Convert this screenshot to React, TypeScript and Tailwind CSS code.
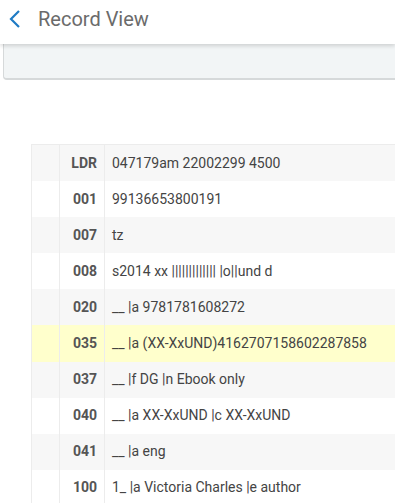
import React from "react";

const rows = [
  { tag: "LDR", value: "047179am 22002299 4500" },
  { tag: "001", value: "99136653800191" },
  { tag: "007", value: "tz" },
  { tag: "008", value: "s2014 xx ||||||||||||| |o||und d" },
  { tag: "020", value: "__ |a 9781781608272" },
  { tag: "035", value: "__ |a (XX-XxUND)4162707158602287858", highlight: true },
  { tag: "037", value: "__ |f DG |n Ebook only" },
  { tag: "040", value: "__ |a XX-XxUND |c XX-XxUND" },
  { tag: "041", value: "__ |a eng" },
  { tag: "100", value: "1_ |a Victoria Charles |e author" },
];

export default function App() {
  return (
    <div
      className="relative h-[503px] w-[395px] overflow-hidden bg-white"
      style={{ fontFamily: "Roboto, 'Liberation Sans', sans-serif" }}
    >
      <header className="relative z-10 flex h-[44px] items-center bg-white pb-[6px] shadow-[0_2px_4px_rgba(0,0,0,0.15)]">
        <button className="ml-[7px] flex h-[30px] w-[16px] items-center justify-center text-[#1f7bc4]">
          <svg width="14" height="20" viewBox="0 0 14 20" fill="none">
            <path d="M11 2 L3 10 L11 18" stroke="currentColor" strokeWidth="2.2" />
          </svg>
        </button>
        <h1 className="ml-[15px] text-[20px] text-[#6b6b6b]">Record View</h1>
      </header>

      <div className="ml-[3px] h-[36px] w-[420px] rounded-bl-[4px] border-b-2 border-l border-[#d6d9da] bg-[#f2f5f6]" />

      <div className="ml-[31px] mt-[64px] w-[400px] border-l border-t border-[#ececec] text-[14px] text-[#444]">
        {rows.map((r) => (
          <div
            key={r.tag}
            className={
              "flex h-[36.1px] items-center " +
              (r.highlight ? "bg-[#ffffcc]" : ["LDR", "007", "020", "037", "041"].includes(r.tag) ? "bg-[#f7f7f7]" : "bg-white")
            }
          >
            <div className="h-full w-[28px] border-r border-[#ececec]" />
            <div className="flex h-full w-[45px] items-center justify-end border-r border-[#ececec] pr-[7px] font-bold text-[#555]">
              {r.tag}
            </div>
            <div className="pl-[7px]">{r.value}</div>
          </div>
        ))}
      </div>
    </div>
  );
}
